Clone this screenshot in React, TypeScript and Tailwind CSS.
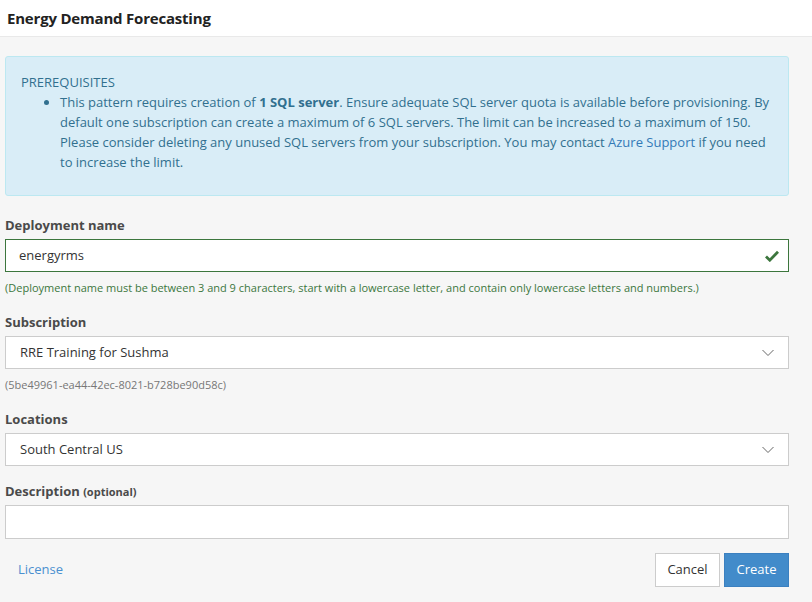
import React from "react";

function Chevron() {
  return (
    <svg width="12" height="8" viewBox="0 0 12 8" className="shrink-0">
      <polyline points="0.5,1 6,6.5 11.5,1" fill="none" stroke="#666" strokeWidth="1" />
    </svg>
  );
}

function Check() {
  return (
    <svg width="14" height="12" viewBox="0 0 14 12" className="shrink-0">
      <path d="M1 6.5 L4.8 10.2 L13 1.8" fill="none" stroke="#3c763d" strokeWidth="2.8" strokeLinejoin="miter" />
    </svg>
  );
}

export default function App() {
  return (
    <div
      className="w-[812px] h-[602px] bg-[#f6f6f6] overflow-hidden text-[#333]"
      style={{ fontFamily: '"Open Sans", "Noto Sans", sans-serif' }}
    >
      <div className="h-[37px] bg-white border-b border-[#e9e9e9] flex items-center px-[7px]">
        <span className="text-[15px] font-bold text-[#222] tracking-[-0.2px]">Energy Demand Forecasting</span>
      </div>

      <div className="pl-[5px] pr-[23px] pt-[19px]">
        <div className="border border-[#bce8f1] bg-[#d9edf7] rounded-[3px] text-[#31708f] pl-[15px] pr-[18px] pt-[15px] pb-[23px] text-[13px] leading-[20px]">
          <div>PREREQUISITES</div>
          <ul className="list-disc pl-[39px]">
            <li>
              This pattern requires creation of <b>1 SQL server</b>. Ensure adequate SQL server quota is available
              before provisioning. By default one subscription can create a maximum of 6 SQL servers. The limit can be
              increased to a maximum of 150. Please consider deleting any unused SQL servers from your subscription. You
              may contact <span className="text-[#337ab7]">Azure Support</span> if you need to increase the limit.
            </li>
          </ul>
        </div>

        <div className="mt-[19px] h-[20px] leading-[20px] text-[13px] font-bold text-[#4a4a4a]">Deployment name</div>
        <div className="mt-[4px] h-[33px] bg-white border border-[#3c763d] flex items-center pl-[13px] pr-[9px]">
          <span className="flex-1 text-[13px] text-[#333]">energyrms</span>
          <Check />
        </div>
        <div className="mt-[8px] h-[16px] leading-[16px] text-[11px] text-[#3c763d]">
          (Deployment name must be between 3 and 9 characters, start with a lowercase letter, and contain only lowercase
          letters and numbers.)
        </div>

        <div className="mt-[16px] h-[20px] leading-[20px] text-[13px] font-bold text-[#4a4a4a]">Subscription</div>
        <div className="mt-[4px] h-[33px] bg-white border border-[#cccccc] flex items-center pl-[14px] pr-[14px]">
          <span className="flex-1 text-[13px] text-[#333]">RRE Training for Sushma</span>
          <Chevron />
        </div>
        <div className="mt-[8px] h-[16px] leading-[16px] text-[11px] text-[#777]">
          (5be49961-ea44-42ec-8021-b728be90d58c)
        </div>

        <div className="mt-[16px] h-[20px] leading-[20px] text-[13px] font-bold text-[#4a4a4a]">Locations</div>
        <div className="mt-[4px] h-[33px] bg-white border border-[#cccccc] flex items-center pl-[14px] pr-[14px]">
          <span className="flex-1 text-[13px] text-[#333]">South Central US</span>
          <Chevron />
        </div>

        <div className="mt-[15px] h-[20px] leading-[20px] text-[13px] font-bold text-[#4a4a4a]">
          Description <span className="text-[11px]">(optional)</span>
        </div>
        <div className="mt-[4px] h-[34px] bg-white border border-[#cccccc]"></div>

        <div className="mt-[14px] flex items-center">
          <span className="pl-[13px] flex-1 text-[13px] text-[#4a90d0]">License</span>
          <div className="flex gap-[4px]">
            <button className="w-[65px] h-[34px] bg-white border border-[#cccccc] text-[13px] text-[#333]">Cancel</button>
            <button className="w-[65px] h-[34px] bg-[#428bca] border border-[#3b80c0] text-[13px] text-white">Create</button>
          </div>
        </div>
      </div>
    </div>
  );
}
